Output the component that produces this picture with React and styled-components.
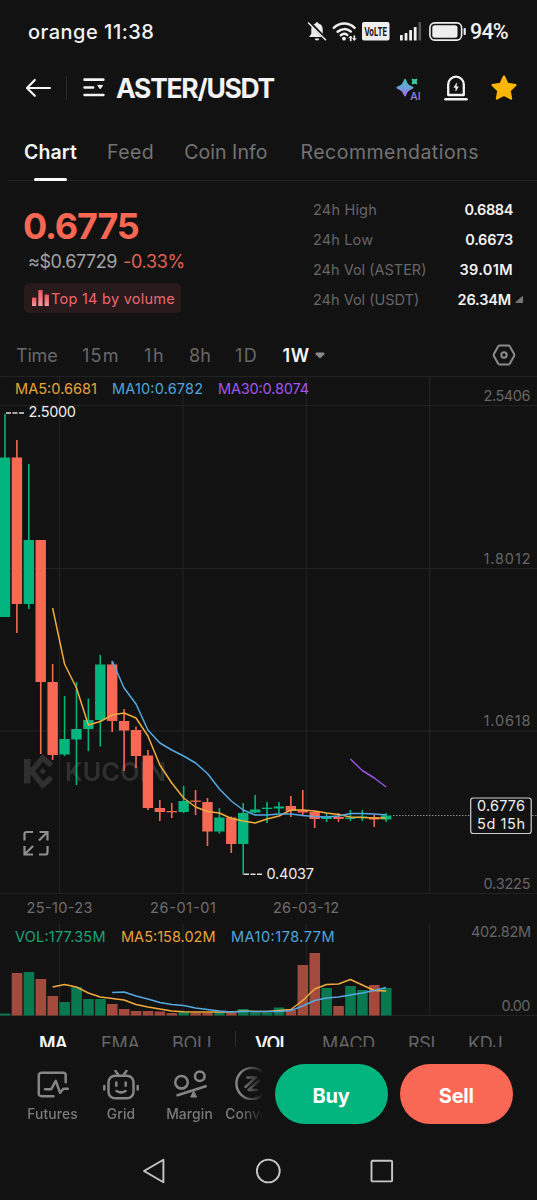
import React from "react";
import styled, { createGlobalStyle } from "styled-components";

const GlobalStyle = createGlobalStyle`
  * { box-sizing: border-box; }
  html, body { margin: 0; background: #121212; }
  body { font-family: Inter, "Liberation Sans", sans-serif; color: #f3f3f3; }
  svg { display: block; flex: none; }
`;

const Screen = styled.main`
  width: 537px;
  height: 1200px;
  background: #121212;
  overflow: hidden;
  display: flex;
  flex-direction: column;
`;

const StatusBar = styled.header`
  height: 63px;
  padding: 0 29px 0 28px;
  display: flex;
  align-items: center;
  justify-content: space-between;
`;
const Clock = styled.span`
  font-size: 20px;
  font-weight: 500;
  letter-spacing: 0.5px;
  white-space: nowrap;
`;
const BatteryLevel = styled.span`
  width: 38px;
  font: 500 21.5px Roboto, "Liberation Sans", sans-serif;
  letter-spacing: -0.8px;
  white-space: nowrap;
`;
const StatusIcons = styled.div`
  display: flex;
  align-items: center;
  gap: ${(p) => p.$gap}px;
`;

const TitleBar = styled.div`
  height: 51px;
  padding: 0 19px 2px 25px;
  display: flex;
  align-items: center;
`;
const TitleDivider = styled.i`
  width: 1px;
  height: 24px;
  margin: 0 16px 0 14px;
  background: #2b2b2b;
`;
const PairName = styled.h1`
  margin: 0 auto 0 11px;
  font-size: 26.5px;
  line-height: 34px;
  font-weight: 700;
  letter-spacing: -1.3px;
`;
const TitleActions = styled.div`
  display: flex;
  align-items: center;
  gap: 22px;
`;

const Tabs = styled.nav`
  height: 67px;
  margin-left: 8px;
  padding: 26px 0 0 16px;
  border-bottom: 1px solid #232323;
  display: flex;
  gap: 30px;
`;
const Tab = styled.span`
  position: relative;
  height: 41px;
  line-height: 24px;
  font-size: 19.5px;
  font-weight: ${(p) => (p.$active ? 600 : 400)};
  color: ${(p) => (p.$active ? "#f5f5f5" : "#737373")};
  letter-spacing: ${(p) => p.$ls || 0}px;
  margin-left: ${(p) => p.$shift || 0}px;
  white-space: nowrap;
  &::after {
    content: "";
    display: ${(p) => (p.$active ? "block" : "none")};
    position: absolute;
    left: 10px;
    bottom: 0;
    width: 33px;
    height: 3px;
    border-radius: 2px;
    background: #fff;
  }
`;

const Summary = styled.section`
  height: 152px;
  padding: 14px 14px 0 24px;
  display: flex;
  justify-content: space-between;
`;
const PriceColumn = styled.div`
  display: flex;
  flex-direction: column;
  align-items: flex-start;
`;
const Price = styled.strong`
  margin: 10px 0 0 -1px;
  font-size: 36px;
  line-height: 42px;
  font-weight: 700;
  letter-spacing: -1.2px;
  color: #f76754;
`;
const PriceSub = styled.div`
  margin: 3px 0 0 4px;
  font-size: 18px;
  line-height: 24px;
  letter-spacing: -0.45px;
  color: #a3a3a3;
  display: flex;
  gap: 6px;
`;
const Change = styled.span`
  color: #e36152;
  letter-spacing: -0.35px;
`;
const RankBadge = styled.div`
  margin-top: 9px;
  width: 157px;
  height: 30px;
  padding-left: 8px;
  border-radius: 5px;
  background: #281a1a;
  color: #ee6674;
  font-size: 14.5px;
  letter-spacing: 0.26px;
  display: flex;
  align-items: center;
  gap: 2px;
  white-space: nowrap;
`;
const Stats = styled.dl`
  margin: -1px 0 0;
  width: 210px;
`;
const StatRow = styled.div`
  height: 30px;
  display: flex;
  align-items: center;
  justify-content: space-between;
  padding-right: 10px;
  font-size: 14.5px;
`;
const StatLabel = styled.dt`
  color: #666;
  letter-spacing: ${(p) => p.$ls}px;
`;
const StatValue = styled.dd`
  margin: 0;
  font-weight: 600;
  font-size: 14.5px;
  letter-spacing: ${(p) => p.$ls}px;
  color: #f3f3f3;
  display: flex;
  align-items: center;
  gap: 4px;
  margin-right: ${(p) => (p.$more ? -10 : 0)}px;
`;

const Intervals = styled.nav`
  height: 43px;
  padding: 1px 21px 0 16px;
  display: flex;
  align-items: center;
  font-size: 18px;
`;
const Interval = styled.span`
  width: ${(p) => p.$w}px;
  color: ${(p) => (p.$active ? "#f5f5f5" : "#686868")};
  font-weight: ${(p) => (p.$active ? 600 : 400)};
  letter-spacing: ${(p) => p.$ls || 0}px;
  display: flex;
  align-items: center;
  gap: 5px;
`;
const Spacer = styled.span`
  flex: 1;
`;

const ChartArea = styled.section`
  height: 640px;
  svg text { font-family: Inter, "Liberation Sans", sans-serif; }
`;

const Indicators = styled.nav`
  height: 31px;
  padding: 16px 0 0 39px;
  overflow: hidden;
  display: flex;
  font-size: 18px;
  line-height: 24px;
  letter-spacing: -0.3px;
`;
const Indicator = styled.span`
  width: ${(p) => p.$w}px;
  color: ${(p) => (p.$active ? "#f5f5f5" : "#656565")};
  font-weight: ${(p) => (p.$active ? 600 : 400)};
  letter-spacing: ${(p) => (p.$active ? -0.9 : -0.3)}px;
`;
const IndicatorDivider = styled.i`
  width: 1px;
  height: 15px;
  margin: -1px 19px 0 0;
  background: #2e2e2e;
`;

const ActionBar = styled.footer`
  height: 94px;
  padding: 17px 24px 0 18px;
  display: flex;
`;
const Tools = styled.div`
  width: 244px;
  overflow: hidden;
  display: flex;
  mask-image: linear-gradient(90deg, #000 222px, transparent 246px);
`;
const Tool = styled.div`
  flex: none;
  width: ${(p) => p.$w}px;
  display: flex;
  flex-direction: column;
  align-items: center;
  gap: 3.5px;
  font-size: 13.8px;
  line-height: 20px;
  font-weight: 500;
  letter-spacing: 0.15px;
  color: #7b7b7b;
  padding-top: 2px;
`;
const TradeButtons = styled.div`
  margin-left: 12.5px;
  display: flex;
  gap: 12px;
`;
const TradeButton = styled.button`
  width: 113.2px;
  height: 60px;
  border: 0;
  border-radius: 30px;
  padding: 3px 0 0;
  background: ${(p) => (p.$side === "buy" ? "#02b47d" : "#f96854")};
  color: #fff;
  font: 700 20px Inter, "Liberation Sans", sans-serif;
  letter-spacing: -0.2px;
`;

const SystemNav = styled.div`
  height: 59px;
  padding: 0 143px 0 142px;
  display: flex;
  align-items: center;
  justify-content: space-between;
`;

/* ---------- icons ---------- */

const MutedBell = () => (
  <svg width="20" height="21" viewBox="0 0 20 21">
    <path d="M10 1.2c.9 0 1.5.6 1.5 1.4 2.8.7 4.2 2.8 4.2 5.6v4.6l2.2 3.1H2.1l2.2-3.1V8.200c0-2.800 1.400-4.900 4.200-5.600 0-.8.600-1.400 1.500-1.400z" fill="#eee" />
    <path d="M7.800 17.500h4.400a2.200 2 0 0 1-4.400 0z" fill="#eee" />
    <path d="M2.600 1.200 19 18.500" stroke="#121212" strokeWidth="3" />
    <path d="M1.500 2 18.500 18.800" stroke="#eee" strokeWidth="1.500" strokeLinecap="round" />
  </svg>
);
const Wifi = () => (
  <svg width="25" height="21" viewBox="0 0 25 21" fill="none" stroke="#eee" strokeWidth="2.500" strokeLinecap="round">
    <path d="M1.800 6.800c6-5.600 14.900-5.600 20.800 0M5.600 10.800c4-3.500 9.300-3.500 13.200-.4M8.800 14.300c2-1.700 4.700-1.700 6.500-.3" />
    <circle cx="12" cy="17.700" r="1.900" fill="#eee" stroke="none" />
    <path d="M18.700 16v3.500M22.300 15v3.500" strokeWidth="1.700" />
    <path d="m16.900 17 1.800-2 1.300 2M21 17.500l1.300 2 1.600-2" strokeWidth="1" />
  </svg>
);
const Volte = () => (
  <svg width="28" height="19" viewBox="0 0 28 19">
    <rect width="27.500" height="18.500" rx="2" fill="#eee" />
    <text x="2.200" y="13.700" fontFamily="Inter, sans-serif" fontSize="12" fontWeight="700" fill="#161616" textLength="23" lengthAdjust="spacingAndGlyphs">VoLTE</text>
  </svg>
);
const Signal = () => (
  <svg width="22" height="19" viewBox="0 0 22 19" fill="#eee">
    <rect x="0" y="13" width="2.800" height="5.500" rx=".6" />
    <rect x="4.600" y="11" width="2.800" height="7.500" rx=".6" />
    <rect x="9.200" y="8" width="2.800" height="10.500" rx=".6" />
    <rect x="13.800" y="5" width="2.800" height="13.500" rx=".6" />
    <rect x="18.500" y="0" width="2.600" height="18.500" rx=".6" fill="#555" />
  </svg>
);
const Battery = () => (
  <svg width="38" height="19" viewBox="0 0 38 19">
    <rect x=".9" y=".9" width="31.700" height="17.200" rx="4.800" fill="none" stroke="#eee" strokeWidth="1.600" />
    <rect x="3.300" y="3.200" width="25.200" height="12.600" rx="2.500" fill="#eee" />
    <rect x="34.600" y="6" width="2.200" height="7" rx="1" fill="#eee" />
  </svg>
);
const BackArrow = () => (
  <svg width="27" height="20" viewBox="0 0 27 20" fill="none" stroke="#f3f3f3" strokeWidth="2.200" strokeLinecap="round" strokeLinejoin="round">
    <path d="M25 10H2.200M9.800 2 2 10l7.800 7.800" />
  </svg>
);
const PairMenu = () => (
  <svg width="22" height="19" viewBox="0 0 22 19">
    <path d="M1.600 1.700h18.700M1.600 9.500h8.500M1.600 17h18.700" stroke="#f3f3f3" strokeWidth="2.700" strokeLinecap="round" />
    <path d="M14.800 7.400h4.800l-2.400 3.400z" fill="#f3f3f3" stroke="#f3f3f3" strokeLinejoin="round" />
  </svg>
);
const AiSpark = () => (
  <svg width="27" height="26" viewBox="0 0 27 26">
    <defs>
      <linearGradient id="spark" x1="0" y1="0" x2="0" y2="1">
        <stop offset="0" stopColor="#37cbb0" />
        <stop offset=".5" stopColor="#6f9fdc" />
        <stop offset="1" stopColor="#a95fea" />
      </linearGradient>
    </defs>
    <path d="M10 4c.6 0 .9.400 1.200 1.300 1.300 3.700 2.600 4.900 6.200 6.300 1.600.6 1.600 1.800 0 2.400-3.600 1.400-4.900 2.600-6.200 6.300-.6 1.700-1.800 1.700-2.400 0C7.500 16.600 6.200 15.400 2.600 14c-1.600-.6-1.600-1.800 0-2.400 3.600-1.400 4.900-2.600 6.200-6.300C9.100 4.400 9.400 4 10 4z" fill="url(#spark)" />
    <path d="M17 4c1.500.7 3.500.7 5 0-.7 1.500-.7 3.500 0 5-1.500-.7-3.500-.7-5 0 .7-1.500.7-3.500 0-5z" fill="#37cb9e" stroke="#37cb9e" strokeLinejoin="round" />
    <text x="15.200" y="24.800" fontFamily="Inter, sans-serif" fontSize="10.500" fontWeight="500" fill="#a181dd">AI</text>
  </svg>
);
const AlertSiren = () => (
  <svg width="24" height="26" viewBox="0 0 24 26" fill="none" stroke="#f3f3f3" strokeLinecap="round" strokeLinejoin="round">
    <path d="M4.200 20V9.500a7.800 7.800 0 0 1 15.600 0V20z" strokeWidth="2.300" />
    <path d="M1.500 24.200h21" strokeWidth="2.500" />
    <path d="M12.500 8.300 9.800 12.600h2v3.500l2.600-4.300h-1.900z" fill="#f3f3f3" strokeWidth=".5" />
  </svg>
);
const Star = () => (
  <svg width="28" height="28" viewBox="0 0 28 28">
    <path d="m14 2.600 3.500 7.300 8 1.100-5.800 5.600 1.400 8-7.100-3.800-7.100 3.800 1.400-8L2.500 11l8-1.100z" fill="#fdb605" stroke="#fdb605" strokeWidth="2.200" strokeLinejoin="round" />
  </svg>
);
const VolumeBars = () => (
  <svg width="17" height="18" viewBox="0 0 17 18">
    <defs>
      <linearGradient id="bars" x1="0" y1="0" x2="0" y2="1">
        <stop offset="0" stopColor="#f0525f" />
        <stop offset="1" stopColor="#f79b9b" />
      </linearGradient>
    </defs>
    <g fill="url(#bars)">
      <rect x="0" y="8.500" width="4.300" height="8.500" rx=".5" />
      <rect x="6.300" y="1" width="4.300" height="16" rx=".5" />
      <rect x="12.600" y="5.500" width="4.300" height="11.500" rx=".5" />
    </g>
  </svg>
);
const CornerTriangle = () => (
  <svg width="8" height="8" viewBox="0 0 8 8">
    <path d="M7.500 1.400v6H.8z" fill="#777" stroke="#777" strokeWidth="1" strokeLinejoin="round" />
  </svg>
);
const CaretDown = () => (
  <svg width="10" height="7" viewBox="0 0 10 7">
    <path d="M1 1h8v1.200L5.600 5.600q-.6.500-1.200 0L1 2.200z" fill="#8a8a8a" stroke="#8a8a8a" strokeLinejoin="round" />
  </svg>
);
const HexSettings = () => (
  <svg width="24" height="22" viewBox="0 0 24 22" fill="none" stroke="#8c8c8c" strokeWidth="2" strokeLinejoin="round">
    <path d="M7.400 1.500h9.200c.5 0 .8.200 1 .6l4.500 8c.3.600.3 1.200 0 1.800l-4.500 8c-.2.400-.5.600-1 .6H7.400c-.5 0-.8-.2-1-.6l-4.500-8c-.3-.6-.3-1.200 0-1.800l4.500-8c.2-.4.500-.6 1-.6z" />
    <circle cx="12" cy="11" r="2.700" />
  </svg>
);
const FuturesIcon = () => (
  <svg width="34" height="34" viewBox="0 0 34 34" fill="none" stroke="#858585" strokeWidth="2.500" strokeLinecap="round" strokeLinejoin="round">
    <path d="M17.500 30.200H5.300a2.500 2.500 0 0 1-2.500-2.500V9.300a2.500 2.500 0 0 1 2.500-2.500h21.900a2.500 2.500 0 0 1 2.500 2.500v7" />
    <path d="M9 23.200h6.200l4.600-8.300 4.300 11.900 3.300-4h4.400" />
  </svg>
);
const GridIcon = () => (
  <svg width="36" height="34" viewBox="0 0 36 34" fill="none" stroke="#858585" strokeWidth="2.500" strokeLinecap="round" strokeLinejoin="round">
    <rect x="5.500" y="9.700" width="25" height="22.500" rx="6.500" />
    <path d="m12.500 5 3 4M23.500 5l-3 4M1.300 20v3.500M34.700 20v3.500M13.300 16.500v3.200M22.700 16.500v3.200" />
    <path d="M13.500 25c2.800 1.700 6.200 1.700 9 0" />
  </svg>
);
const MarginIcon = () => (
  <svg width="36" height="34" viewBox="0 0 36 34" fill="none" stroke="#858585" strokeWidth="2.500" strokeLinecap="round">
    <circle cx="9.500" cy="16.300" r="6.300" />
    <circle cx="27.800" cy="10.200" r="4.800" />
    <path d="M5.500 29.300 33.800 20.300" />
    <path d="m21.500 25.500-2.800 5.500h5.600z" fill="#858585" strokeWidth="1" strokeLinejoin="round" />
  </svg>
);
const ConvertIcon = () => (
  <svg width="34" height="34" viewBox="0 0 34 34" fill="none" stroke="#858585" strokeWidth="2.400" strokeLinecap="round" strokeLinejoin="round">
    <circle cx="17" cy="17.500" r="15.600" />
    <path d="M12.500 11.500h8.500L10.500 21M22 24h-8.500L24 14.500" />
  </svg>
);
const NavBack = () => (
  <svg width="24" height="28" viewBox="0 0 24 28" fill="none" stroke="#c6c6c6" strokeWidth="1.900" strokeLinejoin="round">
    <path d="M21.400 2.800v22.400L2 14z" />
  </svg>
);
const NavHome = () => (
  <svg width="26" height="26" viewBox="0 0 26 26" fill="none" stroke="#c6c6c6" strokeWidth="1.900">
    <circle cx="13.300" cy="13" r="11.400" />
  </svg>
);
const NavRecent = () => (
  <svg width="24" height="24" viewBox="0 0 24 24" fill="none" stroke="#c6c6c6" strokeWidth="1.900">
    <rect x="1.500" y="1.800" width="20.600" height="20.600" rx="1" />
  </svg>
);

/* ---------- chart ---------- */

const UP = "#02b47d";
const DOWN = "#f96854";
const STEP = 11.91;
const candleX = (i) => 5 + STEP * i;

// [rising, high, body top, body bottom, low, volume top]
const CANDLES = [
  [1, 414, 457.5, 617, 617, 1013.5],
  [0, 440, 457.5, 604, 633, 973],
  [1, 464, 540, 604, 609, 972],
  [0, 540, 540, 682, 754, 979],
  [0, 664, 682, 755, 760, 996],
  [1, 696, 739, 754.5, 756, 1002],
  [1, 682, 729, 739.5, 785, 987],
  [1, 698.5, 720, 729, 751, 999],
  [1, 655, 664.5, 720, 746.5, 999],
  [0, 661, 664.5, 721, 732, 1004],
  [0, 709, 721, 730.5, 771, 1009],
  [0, 726.5, 730, 756, 768, 1011],
  [0, 750, 755.5, 808, 810, 1011],
  [0, 800, 808, 812, 821, 1011.5],
  [0, 803, 811, 812.3, 818, 1013],
  [1, 786, 801, 812, 813, 1012],
  [0, 790, 800.5, 801.8, 815, 1013],
  [0, 798, 802, 831.5, 846, 1013],
  [1, 808, 817.5, 831.5, 833.5, 1012],
  [0, 816.5, 817.5, 844, 853, 1013],
  [1, 803, 813, 844, 875, 1009],
  [1, 795, 809.5, 812.5, 813, 1012.5],
  [1, 802, 807.7, 809, 823, 1012.5],
  [1, 802, 806.5, 808.5, 813, 1007.5],
  [0, 796, 806, 811, 817, 1010],
  [0, 790, 810.5, 812.5, 816, 965],
  [0, 811, 812, 819, 828, 953],
  [1, 813, 817, 819, 822, 988],
  [0, 813, 817, 819, 822, 1006],
  [1, 810, 817.5, 819, 821, 986],
  [1, 810, 816.5, 818, 821, 990],
  [0, 815, 817.5, 819.5, 827, 985],
  [1, 813, 815.5, 819.5, 822, 988],
];

const LINES = [
  ["#f2aa3c", 4, [608, 664, 688, 725, 721.5, 715, 713, 718, 736, 765, 783, 798, 807, 811.5, 813, 818.5, 821, 823, 819, 816, 810, 810, 811, 813, 814.5, 817, 817.5, 818, 818]],
  ["#55a9e2", 9, [661, 688, 704, 730, 743, 750, 756, 763, 773.5, 789, 801, 810, 815, 815, 814, 814, 815.5, 816.5, 817, 816, 813.5, 813.5, 814, 815]],
  ["#9b51e0", 29, [759, 770.5, 778, 787]],
  ["#f2aa3c", 4, [987, 984.5, 987, 993, 997, 998.5, 1000, 1004.5, 1007, 1009, 1011, 1011.7, 1012, 1012, 1012, 1012, 1011, 1011.5, 1011.5, 1010.5, 1009.5, 1000.5, 989, 984.5, 984, 979.5, 985, 990.5, 991]],
  ["#55a9e2", 9, [992.5, 992, 996, 999, 1002.5, 1004.5, 1005.5, 1008, 1009.5, 1011, 1012, 1011.5, 1011.5, 1011.5, 1011.5, 1010.5, 1006, 1000.5, 998, 997, 995, 993, 990.5, 987.5]],
];

// [text, x, baseline, width, colour]
const LABELS = [
  ["MA5:0.6681", 15, 393.5, 82, "#e8a33a"],
  ["MA10:0.6782", 112, 393.5, 91, "#4ea6da"],
  ["MA30:0.8074", 218, 393.5, 91, "#a555ea"],
  ["2.5406", 483.5, 400.5, 47, "#666"],
  ["1.8012", 483.5, 563.5, 47, "#666"],
  ["1.0618", 483.5, 726, 47, "#666"],
  ["0.3225", 483.5, 889, 47, "#666"],
  ["25-10-23", 26.5, 912.5, 66, "#6e6e6e"],
  ["26-01-01", 150, 912.5, 66, "#6e6e6e"],
  ["26-03-12", 273, 912.5, 66, "#6e6e6e"],
  ["VOL:177.35M", 15, 941.5, 90.5, "#1ba579"],
  ["MA5:158.02M", 121, 941.5, 94.5, "#e8a33a"],
  ["MA10:178.77M", 231, 941.5, 103.5, "#4ea6da"],
  ["402.82M", 471, 937, 60, "#666"],
  ["0.00", 501.5, 1010.5, 29, "#666"],
  ["2.5000", 28.5, 417.3, 47.5, "#eee"],
  ["0.4037", 266.5, 879, 47.5, "#eee"],
];

const Chart = () => (
  <svg width="537" height="640" viewBox="0 376 537 640">
    <g stroke="#222" strokeWidth="1.200">
      {[376.3, 405.5, 568.5, 731, 893.5, 1015.5].map((y) => (
        <path key={y} d={`M0 ${y}H537`} />
      ))}
      {[59.5, 183, 306.2, 429.5].map((x) => (
        <path key={x} d={`M${x} 376V893M${x} 924V1015`} />
      ))}
    </g>
    <g opacity=".12">
      <path d="M27.200 759v24.500" stroke="#fff" strokeWidth="6.500" />
      <path d="M51.500 765.500 42.700 758 31.500 771.300 42.700 785 51.500 777.500" fill="none" stroke="#fff" strokeWidth="5.500" />
      <path d="m42.700 768 3.300 3.300-3.300 3.300-3.300-3.300z" fill="#fff" />
      <text x="65" y="780.500" fontSize="25" fontWeight="600" fill="#fff" textLength="101">KUCOIN</text>
    </g>
    {CANDLES.map(([up, high, top, bottom, low], i) => (
      <g key={i} fill={up ? UP : DOWN}>
        <rect x={candleX(i) - 0.8} y={high} width="1.600" height={low - high} />
        <rect x={candleX(i) - 5.2} y={top} width="10.400" height={bottom - top} />
      </g>
    ))}
    {CANDLES.map(([up, , , , , vol], i) => (
      <rect key={i} x={candleX(i) - 5.2} y={vol} width="10.600" height={1015.5 - vol} fill={up ? "#08794f" : "#a34a3e"} />
    ))}
    {LINES.map(([color, start, ys], n) => (
      <polyline key={n} fill="none" stroke={color} strokeWidth="1.500" strokeLinejoin="round" points={ys.map((y, i) => `${candleX(start + i)},${y}`).join(" ")} />
    ))}
    <path d="M393 815.5H471" stroke="#8a8a8a" strokeWidth="1" strokeDasharray="1.5 1.5" />
    <path d="M532 815.5H537" stroke="#8a8a8a" strokeWidth="1" strokeDasharray="1.5 1.5" />
    <path d="M6 413H24.500M244 874.300H262.500" stroke="#ddd" strokeWidth="1.500" strokeDasharray="5 1.500" />
    <g fill="none" stroke="#8f8f8f" strokeWidth="2.200">
      <path d="M24.500 840.500V834a2 2 0 0 1 2-2H33M39.500 832H47.500V840.500M47 832.500 39 840.500M24.500 846V854.500H33M25 854l8-8M47.500 846v6.500a2 2 0 0 1-2 2H39" />
    </g>
    <rect x="470.700" y="798" width="60.500" height="35.500" rx="2.500" fill="#121212" stroke="#d0d0d0" strokeWidth="1.200" />
    <g fontSize="14.500">
      {LABELS.map(([text, x, y, width, color]) => (
        <text key={text} x={x} y={y} textLength={width} fill={color}>{text}</text>
      ))}
      <text x="477" y="811.300" textLength="48" fill="#eee">0.6776</text>
      <text x="477" y="829.300" textLength="48" fill="#eee">5d 15h</text>
    </g>
  </svg>
);

// [label, label spacing, value, value spacing, expandable]
const STATS = [
  ["24h High", 0.2, "0.6884", -0.4],
  ["24h Low", 0.15, "0.6673", -0.25],
  ["24h Vol (ASTER)", 0, "39.01M", 0.35],
  ["24h Vol (USDT)", 0, "26.34M", -0.15, true],
];

export default function App() {
  return (
    <>
      <GlobalStyle />
      <Screen>
        <StatusBar>
          <Clock>orange 11:38</Clock>
          <StatusIcons $gap={10}>
            <StatusIcons $gap={5}>
              <MutedBell />
              <Wifi />
              <Volte />
            </StatusIcons>
            <StatusIcons $gap={7}>
              <Signal />
              <StatusIcons $gap={3}>
                <Battery />
                <BatteryLevel>94%</BatteryLevel>
              </StatusIcons>
            </StatusIcons>
          </StatusIcons>
        </StatusBar>
        <TitleBar>
          <BackArrow />
          <TitleDivider />
          <PairMenu />
          <PairName>ASTER/USDT</PairName>
          <TitleActions>
            <AiSpark />
            <AlertSiren />
            <Star />
          </TitleActions>
        </TitleBar>
        <Tabs>
          <Tab $active $ls={0.1}>Chart</Tab>
          <Tab $ls={0.45}>Feed</Tab>
          <Tab $ls={0.05}>Coin Info</Tab>
          <Tab $shift={3} $ls={0.5}>Recommendations</Tab>
        </Tabs>
        <Summary>
          <PriceColumn>
            <Price>0.6775</Price>
            <PriceSub>
              <span>≈$0.67729</span>
              <Change>-0.33%</Change>
            </PriceSub>
            <RankBadge>
              <VolumeBars />
              Top 14 by volume
            </RankBadge>
          </PriceColumn>
          <Stats>
            {STATS.map(([label, labelSpacing, value, valueSpacing, more]) => (
              <StatRow key={label}>
                <StatLabel $ls={labelSpacing}>{label}</StatLabel>
                <StatValue $more={more} $ls={valueSpacing}>
                  {value}
                  {more && <CornerTriangle />}
                </StatValue>
              </StatRow>
            ))}
          </Stats>
        </Summary>
        <Intervals>
          <Interval $w={66} $ls={-0.2}>Time</Interval>
          <Interval $w={62} $ls={1.2}>15m</Interval>
          <Interval $w={45} $ls={1.8}>1h</Interval>
          <Interval $w={46}>8h</Interval>
          <Interval $w={47.5} $ls={1.5}>1D</Interval>
          <Interval $w={60} $ls={0.6} $active>
            1W
            <CaretDown />
          </Interval>
          <Spacer />
          <HexSettings />
        </Intervals>
        <ChartArea>
          <Chart />
        </ChartArea>
        <Indicators>
          <Indicator $w={62} $active>MA</Indicator>
          <Indicator $w={71}>EMA</Indicator>
          <Indicator $w={63}>BOLL</Indicator>
          <IndicatorDivider />
          <Indicator $w={67} $active>VOL</Indicator>
          <Indicator $w={86}>MACD</Indicator>
          <Indicator $w={60}>RSI</Indicator>
          <Indicator $w={50}>KDJ</Indicator>
        </Indicators>
        <ActionBar>
          <Tools>
            <Tool $w={69}><FuturesIcon />Futures</Tool>
            <Tool $w={68}><GridIcon />Grid</Tool>
            <Tool $w={69}><MarginIcon />Margin</Tool>
            <Tool $w={56}><ConvertIcon />Convert</Tool>
          </Tools>
          <TradeButtons>
            <TradeButton $side="buy">Buy</TradeButton>
            <TradeButton $side="sell">Sell</TradeButton>
          </TradeButtons>
        </ActionBar>
        <SystemNav>
          <NavBack />
          <NavHome />
          <NavRecent />
        </SystemNav>
      </Screen>
    </>
  );
}
